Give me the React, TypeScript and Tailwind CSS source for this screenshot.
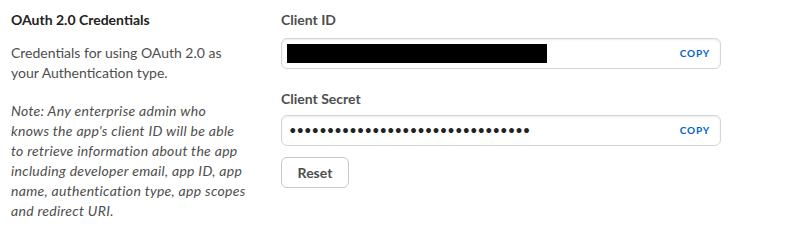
import React from 'react';

const CopyField = ({ children }: { children: React.ReactNode }) => (
  <div className="flex h-[31px] w-[440px] items-center justify-between rounded-md border border-[#d4d4d4] bg-white pl-[5px] pr-[10px] shadow-[inset_0_1px_2px_rgba(0,0,0,0.08)]">
    <div className="flex items-center">{children}</div>
    <button className="text-[10px] font-bold tracking-[0.08em] text-[#0061d5]">COPY</button>
  </div>
);

export default function App() {
  const dots = '•'.repeat(32);

  return (
    <div className="flex w-[785px] bg-white pl-[11px] pt-[10px] font-['Lato',sans-serif]">
      {/* left: description */}
      <div className="w-[236px] shrink-0">
        <h3 className="text-[14px] font-bold leading-5 text-[#222222]">OAuth 2.0 Credentials</h3>
        <p className="mt-[13px] text-[14px] leading-5 text-[#4e4e4e]">
          Credentials for using OAuth 2.0 as your Authentication type.
        </p>
        <p className="mt-[18px] text-[14px] italic leading-5 tracking-[0.3px] text-[#4e4e4e]">
          Note: Any enterprise admin who knows the app's client ID will be able to retrieve information about the app
          including developer email, app ID, app name, authentication type, app scopes and redirect URI.
        </p>
      </div>

      {/* right: fields */}
      <div className="ml-[34px] flex flex-col">
        <label className="text-[14px] font-bold leading-5 text-[#4e4e4e]">Client ID</label>
        <div className="mt-[8px]">
          <CopyField>
            <div className="h-[19px] w-[260px] bg-black" />
          </CopyField>
        </div>

        <label className="mt-[20px] text-[14px] font-bold leading-5 text-[#4e4e4e]">Client Secret</label>
        <div className="mt-[6px]">
          <CopyField>
            <span className="pl-[2px] text-[13px] leading-none text-[#222222]">{dots}</span>
          </CopyField>
        </div>

        <button className="mt-[11px] h-[31px] w-[68px] rounded-md border border-[#c8c8c8] bg-white text-[14px] font-bold text-[#4e4e4e]">
          Reset
        </button>
      </div>
    </div>
  );
}
